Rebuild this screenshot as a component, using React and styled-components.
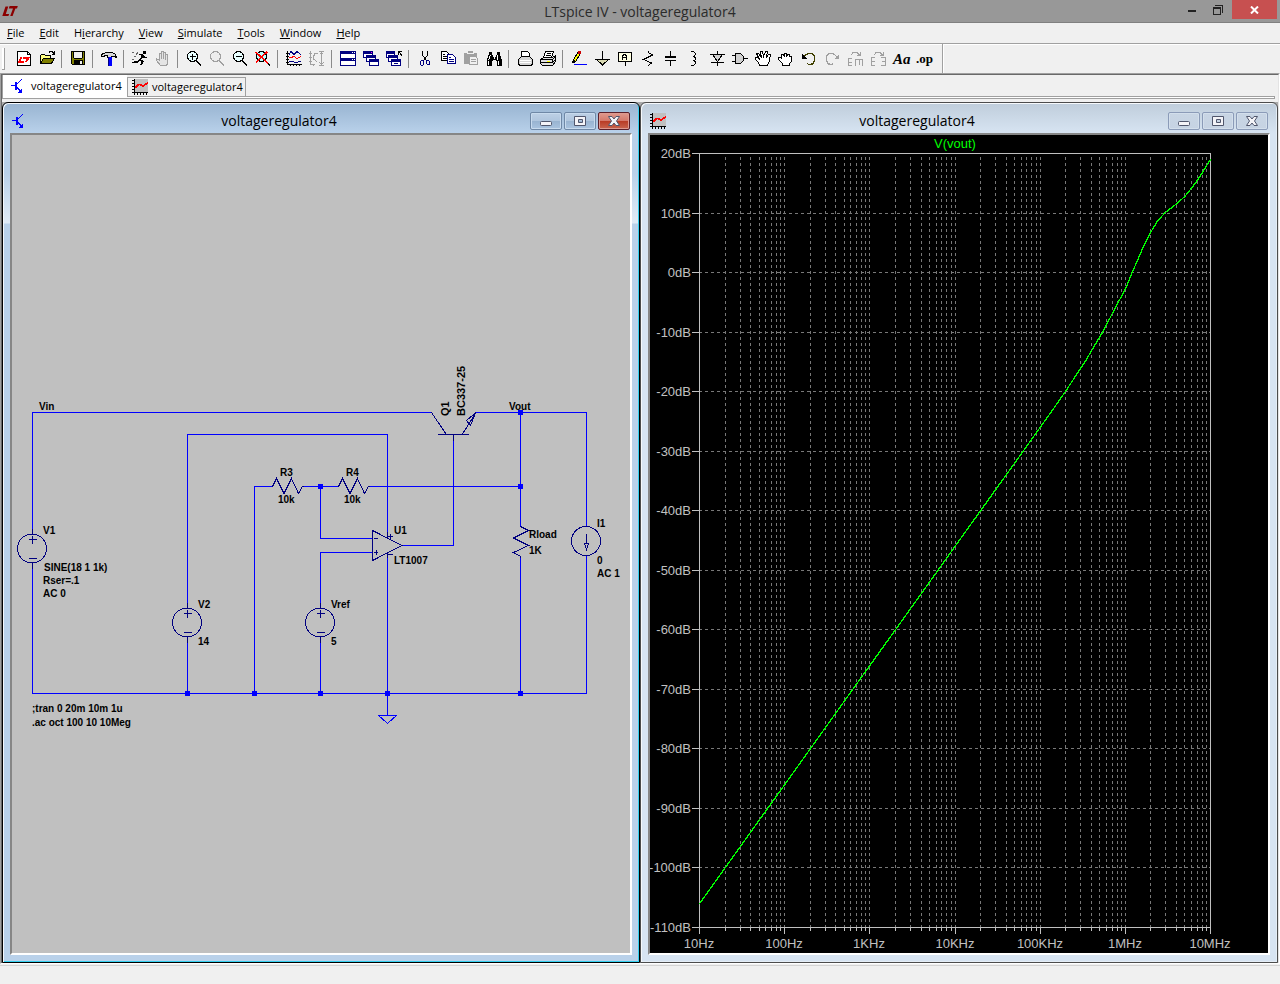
import React, { useLayoutEffect, useRef, useState } from "react";
import styled, { createGlobalStyle, css } from "styled-components";

const GlobalStyle = createGlobalStyle`
  * { box-sizing: border-box; }
  body { margin: 0; background: #f0f0f0; font-family: "Open Sans", "Noto Sans", sans-serif; color: #000; }
  button { font: inherit; color: inherit; border: 0; padding: 0; background: none; }
  svg { display: block; flex: none; }
`;

/* ---------- layout ---------- */

const Page = styled.div`
  display: flex;
  flex-direction: column;
  min-height: 100vh;
`;

const TitleBar = styled.header`
  display: grid;
  grid-template-columns: 1fr auto 1fr;
  height: 23px;
  background: #989898;
  border-bottom: 1px solid #808080;
`;

const Logo = styled.svg`
  margin: 6px 0 0 2px;
`;

const AppTitle = styled.h1`
  margin: 0;
  font-size: 14px;
  line-height: 23px;
  font-weight: 400;
  color: #2b2b2b;
`;

const Controls = styled.div`
  display: flex;
  justify-content: flex-end;
  padding-right: 3px;
`;

const Control = styled.button`
  display: grid;
  place-items: center;
  width: ${(p) => (p.$close ? 45 : 26)}px;
  height: 19px;
  margin-left: ${(p) => (p.$close ? 1 : 0)}px;
  background: ${(p) => (p.$close ? "#c75050" : "transparent")};
`;

const MenuBar = styled.nav`
  display: flex;
  gap: 1px;
  height: 20px;
  background: #f0f0f0;
`;

const MenuButton = styled.button`
  padding: 0 7px;
  font-size: 11px;
  line-height: 20px;
`;

const ToolBar = styled.div`
  display: flex;
  align-items: center;
  height: 30px;
  border-top: 1px solid #a0a0a0;
  box-shadow: inset 0 1px 0 #fff;
  padding-left: 2px;
`;

const Grip = styled.span`
  width: 3px;
  height: 22px;
  margin-right: 8px;
  border: 1px solid #a0a0a0;
  border-width: 0 1px 1px 0;
  background: #fff;
`;

const ToolButton = styled.button`
  width: 23px;
  height: 22px;
  padding: 3px;
`;

const Divider = styled.span`
  width: 1px;
  height: 18px;
  margin: 0 5px 0 2px;
  background: #8a8a8a;
`;

const ToolEnd = styled.span`
  width: 2px;
  align-self: stretch;
  margin-left: 6px;
  border-left: 1px solid #a0a0a0;
  border-right: 1px solid #fff;
`;

const Workspace = styled.main`
  display: flex;
  flex: 1;
  border: 1px solid;
  border-color: #a0a0a0 #fff #fff #a0a0a0;
`;

const WorkspaceInner = styled.div`
  display: flex;
  flex-direction: column;
  flex: 1;
  min-width: 0;
  border: 1px solid;
  border-color: #696969 #e3e3e3 transparent #696969;
  border-bottom: 0;
`;

const Tabs = styled.div`
  display: flex;
  align-items: flex-end;
  height: 21px;
`;

const Tab = styled.button`
  display: flex;
  align-items: center;
  gap: 4px;
  white-space: nowrap;
  font-size: 11px;
  line-height: 18px;
  ${(p) =>
    p.$active
      ? css`
          position: relative;
          height: 22px;
          width: 125px;
          margin-bottom: -1px;
          padding: 0 0 1px 8px;
          background: #fff;
          border-left: 1px solid #a0a0a0;
        `
      : css`
          height: 19px;
          width: 119px;
          padding: 0 0 0 4px;
          background: #f0f0f0;
          border: 1px solid #a0a0a0;
          border-bottom: 0;
        `}
`;

const TabPage = styled.div`
  height: 3px;
  margin: 0 3px 3px 0;
  border: 1px solid #a0a0a0;
  background: #fff;
`;

const Windows = styled.div`
  display: flex;
  flex: 1;
  background: #ababab;
`;

const Win = styled.section`
  display: flex;
  flex-direction: column;
  flex: 1 1 0;
  min-width: 0;
  padding: 0 7px 7px;
  border: 1px solid ${(p) => (p.$active ? "#000" : "#4c4c4c")};
  border-radius: 6px 6px 0 0;
  ${(p) =>
    p.$active
      ? css`
          background: linear-gradient(#98b4d1 0, #b9d1ea 30px, #b9d1ea 70px, #e0ebf6 120px, #b9d1ea 121px);
          box-shadow: inset 1px 1px 0 #f4f8fc, inset -1px -1px 0 #35d0f0;
        `
      : css`
          background: linear-gradient(#bfcddb 0, #d7e4f2 30px);
          box-shadow: inset 1px 1px 0 #f6f9fc, inset -1px -1px 0 #e4edf6;
        `}
`;

const WinHeader = styled.header`
  display: flex;
  align-items: center;
  gap: 2px;
  height: 30px;
  padding: 5px 2px 0 2px;
`;

const WinTitle = styled.h2`
  flex: 1;
  margin: 0;
  text-align: center;
  font-size: 14px;
  line-height: 22px;
  font-weight: 400;
`;

const WinButton = styled.button`
  display: grid;
  place-items: center;
  width: 32px;
  height: 18px;
  border-radius: 2px;
  border: 1px solid ${(p) => (p.$red ? "#5b1f2a" : p.$active ? "#6f88a6" : "#8b9bb8")};
  box-shadow: inset 0 0 0 1px ${(p) => (p.$red ? "#dd9a90" : p.$active ? "#c8dbee" : "#d3dfec")};
  background: ${(p) =>
    p.$red
      ? "linear-gradient(#e09a8e 0, #d4796b 48%, #b83a24 50%, #c9654f 100%)"
      : p.$active
        ? "linear-gradient(#bdd0e5 0, #b0c6de 48%, #98b3d0 50%, #aac4e0 100%)"
        : "linear-gradient(#c8d5e4, #c6d3e3)"};
`;

const Client = styled.div`
  display: grid;
  flex: 1;
  min-height: 0;
  overflow: hidden;
  border: 2px solid;
  border-color: #868686 #fff #fff #868686;
  background: ${(p) => (p.$dark ? "#000" : "#c0c0c0")};
`;

const StatusBar = styled.footer`
  height: 20px;
  margin-top: 1px;
  border-top: 1px solid #d4d4d4;
  background: #f0f0f0;
`;

const SchematicText = styled.text`
  font: bold ${(p) => (p.$part ? 11 : 10)}px "Liberation Sans", sans-serif;
  fill: #000;
`;

const PlotText = styled.text`
  font: 13px "Liberation Sans", sans-serif;
  fill: ${(p) => (p.$trace ? "#00ff00" : "#c0c0c0")};
`;

const GlyphText = styled.text`
  font: italic bold 15px "Liberation Serif", serif;
  fill: #000;
  ${(p) => p.$upright && "font-style: normal; font-size: 13px;"}
`;

/* ---------- icons ---------- */

const K = "#000";
const N = "#000080";
const G = "#a0a0a0";

const L = (d, stroke = K, fill = "none", w = 1) => <path d={d} stroke={stroke} fill={fill} strokeWidth={w} />;
const F = (d, fill = K) => <path d={d} fill={fill} />;

const lens = (c, glass) => (
  <>
    <circle cx="6.5" cy="5.5" r="5" stroke={c} fill={glass} />
    {L("M10 9.5L15 14.5", c, "none", 2)}
  </>
);

const miniWin = (x, y, w, h) => (
  <>
    <rect x={x + 0.5} y={y + 0.5} width={w - 1} height={h - 1} stroke={N} fill="#fff" />
    <rect x={x} y={y} width={w} height="3" fill={N} />
  </>
);

const openHand = (c, fill) =>
  L("M4.5 14.5L3.5 11.5L0.5 8.5V6.5H2.5L4.5 8.5L1.5 2.5L3.5 2.5L6.5 6.5L5.5 0.5H7.5L8.5 5.5L10.5 0.5H12.5L11.5 6.5L13.5 3.5H15.5L14.5 9.5L12.5 14.5Z", c, fill);

const glyphs = {
  newFile: <>{L("M1.5 0.5H11.5L14.5 3.5V14.5H1.5Z", K, "#fff")}{L("M11.5 0.5V3.5H14.5")}{L("M5.5 6L3.5 10.5H7.5M7 6.5H12.5L10 11", "#f00", "none", 2)}</>,
  open: <>{L("M1.5 12.5V4.5L2.5 3.5H5.5L6.5 4.5H11.5V7.5", K, "#ffff80")}{L("M1.5 12.5L4.5 7.5H15.5L12.5 12.5Z", K, "#808000")}{L("M9.5 2.5L11 0.5H13L15.5 3M15.5 0V3.5H12.5")}</>,
  save: <>{L("M1.5 0.5H14.5V13.5H2.5L1.5 12.5Z", K, "#808000")}{F("M4 1H12V7H4Z", "#f0f0f0")}{F("M4 9H13V14H4Z")}{F("M10 10H12V13H10Z", "#f0f0f0")}{L("M3.5 1V6.5L4.5 7.5H11.5L12.5 6.5V1")}</>,
  hammer: <>{L("M0.5 5.5V3.5L2.5 2.5L5.5 1.5H11.5L14.5 3.5L15.5 6.5L13.5 5.5H10.5V6.5H6.5V4.5H4.5L2.5 5.5Z", K, "#d8d8d8")}{F("M7 6H11V15H7Z", "#00f")}{F("M7 6H8V15H7Z", N)}</>,
  run: <>{F("M11 0H14V3H11Z")}{L("M6.5 3.5L8.500 3.500L11 4.500L8 9L11 10.500L8.500 14.500M8 8.500L5 11L0 11.500M11 4.500L12.500 6.500L15 6.500", K, "none", 1.6)}{L("M0 1.5H2M4 3.5L6 1.5M2 5.5H4M0 8.5H2", "#666")}</>,
  stop: L("M5.5 14.5L1.5 9.5L1.5 7.5L4.5 9.5V2.5H6.5V7.5V0.5H8.5V7.5V1.5H10.5V8.5V3.5H12.5V12.5L11.5 14.5Z", G, "#e4e4e4"),
  zoomIn: <>{lens(K, "#e8ffff")}{L("M6.5 2.5V8.5M3.5 5.5H9.5")}</>,
  pan: lens(G, "#ededed"),
  zoomOut: <>{lens(K, "#e8ffff")}{L("M3.5 5.5H9.5")}</>,
  zoomFit: <>{lens(K, "#b8ffff")}{L("M0.5 1L13 12M12.5 0.5L1 11.5", "#f00", "none", 1.6)}</>,
  plot: <>{L("M1.5 0V13.5H16M0 2.5H3M0 5.5H3M0 8.5H3M0 11.5H3M4.5 13V15M7.5 13V15M10.5 13V15M13.5 13V15")}{L("M3 3.5L5 0.5L8 3.500L11 0.500L15 3.500", N)}{L("M3 6.5H5L8 5.500L11 7.500L15 5.500", "#f00")}{L("M3 10.5H7L9 11.5L15 10.5", N)}</>,
  axes: <>{L("M1.5 0V13.5H6M0 2.5H3M0 6.5H3M0 10.5H3M4.5 13V15M12.5 1V14M10 0.5H15M10 14.5H15M10.5 3.5L12.5 1.500L14.500 3.500M10.500 11.500L12.500 13.500L14.500 11.500", G)}{L("M9 2.5L6 2.5L4.5 5.5L5 8.5L8 10.5", G)}</>,
  tile: <>{miniWin(0, 0, 16, 8)}{miniWin(0, 7, 16, 8)}{F("M12 1H13V2H12ZM14 1H15V2H14ZM12 8H13V9H12ZM14 8H15V9H14Z", "#fff")}</>,
  cascade: <>{miniWin(0, 0, 10, 7)}{miniWin(3, 4, 10, 7)}{miniWin(6, 8, 10, 7)}{F("M8 1H9V2H8Z", "#f0f")}</>,
  closeAll: <>{miniWin(0, 0, 9, 7)}{miniWin(2, 4, 10, 7)}{miniWin(5, 8, 10, 7)}{L("M12.5 4V0.5H16M12.5 0.5L16 4.5")}{L("M8 12.5H12", N)}</>,
  cut: <>{L("M5.5 0V4L9.5 9.5M10.5 0V4L6.5 9.5")}{L("M4.5 9.5H6.5V13.5L5.5 14.5H4.5L3.5 13.5V10.5ZM9.5 9.5H11.5L12.5 10.5V13.5H10.5L9.5 12.5Z", N)}</>,
  copy: <>{L("M1.5 0.5H6.5L9.5 3.5V9.5H1.5Z", K, "#fff")}{L("M3 3.5H5M3 5.5H8M3 7.5H8")}{L("M7.5 3.5H12.500L15.500 6.500V12.500H7.500Z", N, "#fff")}{L("M9 6.5H11M9 8.5H14M9 10.5H14", N)}</>,
  paste: <>{F("M1 2H5V0H10V2H14V13H1Z", G)}{L("M4 2.5H11", "#f0f0f0")}{L("M6.5 5.5H12.5L14.5 7.5V13.5H6.5Z", G, "#f0f0f0")}{L("M8 8.5H13M8 10.5H13", G)}</>,
  find: <>{F("M3 1H6V3L7 5V6H10V5L11 3V1H14V3L16 9V15H11V10H10V9H7V10H6V15H1V9L3 3Z")}{L("M4.5 4L2.5 9M11.5 4V9M2.5 10V14M12.5 10V14", "#fff")}{F("M8 6H9V8H8Z", "#f0f0f0")}</>,
  print: <>{L("M4.5 5.5V0.5H10.5L12.5 2.5V5.5", K, "#fff")}{L("M1.5 8.5L4.5 5.5H12.5L15.5 8.5V13.5H14.5V14.5H2.5V13.5H1.5Z", K, "#d4d4d4")}{L("M3 9.5H14M3 11.5H14", "#fff")}</>,
  printer: <>{L("M3.5 6.5L5.5 0.5H13.5L11.5 6.5", K, "#fff")}{L("M7 2.5H11M6 4.5H11")}{L("M0.5 8.5L3.5 6.5H12.5L15.5 4.5V10.5L12.5 14.5H2.5L0.5 12.5Z", K, "#e0e0e0")}{L("M0.5 8.5H12.5L15.5 5.5M0.5 11.5H12.5V8.5M12.5 11.5L15 9")}{F("M7 10H10V11H7Z", "#ff0")}</>,
  pencil: <>{L("M7.5 0.5L9.5 2.5L4.5 10.5L2.500 11.500V8.500Z", K, "#ff0")}{F("M7 0H10V3H7Z", "#c00")}{F("M2 9H4V12H1V11Z")}{L("M3 13.5H16", "#00f")}</>,
  ground: <>{L("M8.5 0V8")}{L("M2.5 8.5H14.5L8.5 14Z", K, "#d8d8b0")}{L("M1 8.5H16")}</>,
  label: <>{L("M1.5 1.5H14.5V10.5H1.5Z", K, "#ffffe0")}{L("M8 11V15M5.5 9V5.5L6.5 3.5H8.5L9.5 5.5V9M6 6.5H9", K)}</>,
  resistor: L("M8.5 0V1.5L12.5 4L3.5 8.5L11.5 12L8.5 14.5V15", K),
  capacitor: <>{L("M7.5 0V6M7.5 9V15")}{F("M2 5H13V7H2ZM2 9H13V10H2Z")}</>,
  inductor: L("M4.5 0.5H7.5L9.5 2.5V3.5L7.5 5.5H6.5H8.5L9.5 7.5V8.5L8.5 9.5H6.5H8.5L9.5 11.5V12.5L7.5 14.5H4.5"),
  diode: <>{L("M8.5 0V3M8.5 10V15M1 3.5H16M2 11.5H15")}{L("M3.5 3.5H13.5L8.5 10.5Z", K, "#d0d0d0")}</>,
  gate: <>{L("M0 4.5H4M0 10.5H4M12 7.5H16")}{L("M3.5 2.5H8.5L11.5 5.5V9.5L8.5 12.5H3.5Z", K, "#d0d0d0")}</>,
  move: openHand(K, "#fff"),
  drag: L("M4.500 14.500V12.500L0.500 8.500V6.500H2.500L3.500 7.500V3.500H5.500L6.500 5.500V2.500H8.500V5.500L9.500 3.500H11.500V5.500H13.500V10.500L11.500 12.500V14.500Z", K, "#fff"),
  undo: <>{L("M2.5 6L6 3L8.5 2.5H11L13.500 5.500V10L11.500 13L8 13.500L6 12.500", "#404000", "none", 1.3)}{F("M1 3L1 8H6Z")}</>,
  redo: <>{L("M13 6L10 3L7.500 2.500H5L2.500 5.500V10L4.500 13L8 13.500L9.500 12.500", G, "none", 1.3)}{F("M15 3V8H10Z", G)}</>,
  rotate: L("M5 7.5H1.5V14.5H5M1.5 11.5H5M8.5 15V8.5H15.5V15M12 8.5V14M3.5 4.5L6 1.5H10L13 4.5M13.5 1V4.5H10", G),
  mirror: L("M5 6.5H1.5V14.5H5M1.5 10.5H5M11 6.5H15.5V14.5H11M15.5 10.5H12M3.5 4.5L6 1.5H10L13 4.5M13.5 1V4.5H10", G),
  text: <GlyphText x="0" y="13">Aa</GlyphText>,
  op: <GlyphText $upright x="0" y="12">.op</GlyphText>,
  transistor: <>{F("M4 4H6V12H4ZM0 7H4V8H0Z", "#00f")}{L("M6 6L10.500 1.500M6 9.500L10 13.500", "#00f")}{F("M11 15V11L9 12L7 15Z", "#00f")}</>,
  wave: <>{F("M2 0H16V13H2Z", "#c0c0c0")}{L("M2.5 0V16M0 1.5H2M0 4.5H2M0 7.5H2M0 10.5H2M0 13.5H16M5.5 14V16M8.5 14V16M11.5 14V16M14.5 14V16")}{L("M3 9L6.5 5.5H8.5L11 7.5L16 3.5", "#f00", "none", 1.6)}</>,
};

const Icon = ({ name }) => (
  <svg width="16" height="16" viewBox="0 0 16 16" fill="none" shapeRendering="crispEdges" overflow="visible" aria-hidden="true">
    {glyphs[name]}
  </svg>
);

const toolGroups = [
  [["newFile", "New schematic"], ["open", "Open"]],
  [["save", "Save"]],
  [["hammer", "Control panel"]],
  [["run", "Run"], ["stop", "Halt"]],
  [["zoomIn", "Zoom in"], ["pan", "Pan"], ["zoomOut", "Zoom out"], ["zoomFit", "Zoom full extents"]],
  [["plot", "Autorange"], ["axes", "Pick visible traces"]],
  [["tile", "Tile windows"], ["cascade", "Cascade windows"], ["closeAll", "Close all windows"]],
  [["cut", "Cut"], ["copy", "Copy"], ["paste", "Paste"], ["find", "Find"]],
  [["print", "Print setup"], ["printer", "Print"]],
  [
    ["pencil", "Wire"], ["ground", "Ground"], ["label", "Label net"], ["resistor", "Resistor"],
    ["capacitor", "Capacitor"], ["inductor", "Inductor"], ["diode", "Diode"], ["gate", "Component"],
    ["move", "Move"], ["drag", "Drag"], ["undo", "Undo"], ["redo", "Redo"],
    ["rotate", "Rotate"], ["mirror", "Mirror"], ["text", "Text"], ["op", "SPICE directive"],
  ],
];

/* [text before mnemonic, mnemonic, rest] */
const menus = [
  ["", "F", "ile"], ["", "E", "dit"], ["H", "i", "erarchy"], ["", "V", "iew"],
  ["", "S", "imulate"], ["", "T", "ools"], ["", "W", "indow"], ["", "H", "elp"],
];

/* ---------- schematic ---------- */

const Source = ({ x, y }) => (
  <g stroke={N} fill="none">
    <circle cx={x - 0.5} cy={y} r="14.5" />
    <path d={`M${x} ${y - 20}v6M${x} ${y + 14}v6M${x - 4} ${y - 9}h8M${x} ${y - 13}v8M${x - 4} ${y + 10}h8`} />
  </g>
);

const Resistor = ({ x, y, vertical }) => (
  <path
    d="M-16 0H-15L-11 -8L-3.5 7L4 -8L11 7L15 0H16"
    transform={`translate(${x} ${y})${vertical ? " rotate(90)" : ""}`}
    stroke={N}
    fill="none"
  />
);

const nodes = [[187, 693], [254, 693], [320, 693], [387, 693], [520, 693], [320, 486], [520, 486], [520, 412]];

const labels = [
  [39, 410, "Vin"], [509, 410, "Vout"], [43, 534, "V1"], [44, 571, "SINE(18 1 1k)"], [43, 584, "Rser=.1"],
  [43, 597, "AC 0"], [198, 608, "V2"], [198, 645, "14"], [280, 476, "R3"], [278, 503, "10k"], [346, 476, "R4"],
  [344, 503, "10k"], [394, 534, "U1"], [394, 564, "LT1007"], [331, 608, "Vref"], [331, 645, "5"],
  [529, 538, "Rload"], [529, 554, "1K"], [597, 527, "I1"], [597, 564, "0"], [597, 577, "AC 1"],
  [32, 712, ";tran 0 20m 10m 1u"], [32, 726, ".ac oct 100 10 10Meg"],
];

const Schematic = () => (
  <svg width="618" height="610" viewBox="12 135 618 610" role="img" aria-label="Voltage regulator schematic">
    <g shapeRendering="crispEdges">
      <path
        stroke="#0000ff"
        fill="none"
        d="M32.5 534V412.5H431.5M32.5 563V693.5H586.5V556M187.5 608V434.5H387.5V534M187.5 637V693
           M272 486.5H254.5V693M303 486.5H338M369 486.5H520.5M320.5 486V538.5H372M372 552.5H320.5V608
           M320.5 637V693M387.5 556V715.5M402 545.5H453.5V440M476 412.5H586.5V526M520.5 412V526M520.5 557V693
           M378.5 715.5H396.5L387.5 723.5Z"
      />
      <Source x={32.5} y={548.5} />
      <Source x={187.5} y={622.5} />
      <Source x={320.5} y={622.5} />
      <Resistor x={287.5} y={486.5} />
      <Resistor x={353.5} y={486.5} />
      <Resistor x={520.5} y={541.5} vertical />
      <g stroke={N} fill="none">
        <path d="M372.5 530.5V560.5L402 545.5ZM374 538.5H378M374 552.5H378M376.5 550V555M388 536.5H393M390.5 534V539M388 554.5H393M387.5 532V538M387.5 553V558" />
        <path d="M431.5 412.5L446 434M438 434.5H469M453.5 434V441M476 412.5L462.5 434M475.5 413L466.5 420.5L470.5 425.5Z" />
        <circle cx="586" cy="541" r="14.5" />
        <path d="M586.5 534V543M584.5 543.5H588.5L586.5 549.5Z" />
      </g>
      {nodes.map(([x, y]) => (
        <rect key={`${x}-${y}`} x={x - 2} y={y - 2} width="5" height="5" fill="#0000ff" />
      ))}
    </g>
    {labels.map(([x, y, t]) => (
      <SchematicText key={`${x}-${y}`} x={x} y={y}>{t}</SchematicText>
    ))}
    <SchematicText $part transform="translate(449 416) rotate(-90)">Q1</SchematicText>
    <SchematicText $part transform="translate(465 416) rotate(-90)">BC337-25</SchematicText>
  </svg>
);

/* ---------- plot ---------- */

/* [decades above 10 Hz, gain in dB] */
const trace = [
  [0, -106], [4.15, -23], [4.3, -19.9], [4.53, -14.9], [4.75, -9.6], [4.86, -6.5], [5, -2.8], [5.08, 0], [5.22, 4.6],
  [5.29, 6.6], [5.38, 8.7], [5.47, 10.1], [5.58, 11.3], [5.7, 12.8], [5.79, 14.4], [5.87, 16], [5.93, 17.4], [6, 19],
];
const freqs = ["10Hz", "100Hz", "1KHz", "10KHz", "100KHz", "1MHz", "10MHz"];

const useSize = (initial) => {
  const ref = useRef(null);
  const [size, setSize] = useState(initial);
  useLayoutEffect(() => {
    const el = ref.current;
    const read = () => setSize([el.clientWidth, el.clientHeight]);
    read();
    const ro = new ResizeObserver(read);
    ro.observe(el);
    return () => ro.disconnect();
  }, []);
  return [ref, size];
};

const PlotArea = styled.div`
  min-width: 0;
  min-height: 0;
  overflow: hidden;
`;

const Plot = () => {
  const [ref, [w, h]] = useSize([618, 818]);
  const left = 49;
  const right = Math.max(w - 58, left + 100);
  const top = 18;
  const bottom = Math.max(h - 26, top + 100);
  const px = (d) => left + (d / 6) * (right - left) + 0.5;
  const py = (db) => top + ((20 - db) / 130) * (bottom - top) + 0.5;
  const snap = (v) => Math.floor(v) + 0.5;
  const dbs = Array.from({ length: 14 }, (_, i) => 20 - i * 10);
  const cols = [];
  for (let d = 0; d < 6; d++) for (let m = 2; m <= 10; m++) cols.push(d + Math.log10(m));
  return (
    <PlotArea ref={ref}>
      <svg width={w} height={h} role="img" aria-label="V(vout) frequency response">
        <g shapeRendering="crispEdges" fill="none" stroke="#c0c0c0">
          <g stroke="#787878" strokeDasharray="3 3">
            {cols.slice(0, -1).map((d) => <path key={d} d={`M${snap(px(d))} ${top + 4}V${bottom}`} />)}
            {dbs.slice(1, -1).map((v) => <path key={v} d={`M${left} ${snap(py(v))}H${right}`} />)}
          </g>
          <rect x={left + 0.5} y={top + 0.5} width={right - left} height={bottom - top} />
          {dbs.map((v) => <path key={v} d={`M${left - 7} ${snap(py(v))}H${left}`} />)}
          {cols.map((d) => <path key={d} d={`M${snap(px(d))} ${bottom}v${Number.isInteger(d) ? 7 : 4}`} />)}
          <path d={`M${left + 0.5} ${bottom}v7`} />
          <polyline points={trace.map(([d, v]) => `${px(d)},${py(v)}`).join(" ")} stroke="#00ff00" strokeWidth="1.3" />
        </g>
        {dbs.map((v) => <PlotText key={v} x={left - 8} y={Math.floor(py(v)) + 5} textAnchor="end">{v}dB</PlotText>)}
        {freqs.map((f, i) => <PlotText key={f} x={Math.floor(px(i))} y={bottom + 21} textAnchor="middle">{f}</PlotText>)}
        <PlotText $trace x={Math.round((left + right) / 2)} y="13" textAnchor="middle">V(vout)</PlotText>
      </svg>
    </PlotArea>
  );
};

/* ---------- windows ---------- */

const WindowGlyph = ({ kind }) => (
  <svg width="14" height="12" viewBox="0 0 14 12" fill="#f4f4f8" stroke="#50566c" strokeWidth="1" aria-hidden="true">
    {kind === "min" && <rect x="1.5" y="6.5" width="11" height="4" rx="1" />}
    {kind === "max" && <path fillRule="evenodd" d="M1.5 1.5H12.5V10.5H1.5ZM5.5 4.5H9.5V7.5H5.5Z" />}
    {kind === "close" && <path d="M1.5 1.5H5L7 4L9 1.5H12.5L9.5 6L12.5 10.5H9L7 8L5 10.5H1.5L4.5 6Z" />}
  </svg>
);

const DocWindow = ({ icon, title, active, dark, children }) => (
  <Win $active={active}>
    <WinHeader>
      <Icon name={icon} />
      <WinTitle>{title}</WinTitle>
      <WinButton $active={active} aria-label="Minimize"><WindowGlyph kind="min" /></WinButton>
      <WinButton $active={active} aria-label="Maximize"><WindowGlyph kind="max" /></WinButton>
      <WinButton $active={active} $red={active} aria-label="Close"><WindowGlyph kind="close" /></WinButton>
    </WinHeader>
    <Client $dark={dark}>{children}</Client>
  </Win>
);

export default function App() {
  return (
    <Page>
      <GlobalStyle />
      <TitleBar>
        <Logo width="16" height="11" viewBox="0 0 16 11" fill="#8b0000" aria-hidden="true">
          <path d="M3.5 0.5H6.3L3.8 8H7.2L6.4 10H0.3ZM7.6 0H15.8L15 2.4H13.4L10.6 10H8.2L11 2.4H6.8Z" />
        </Logo>
        <AppTitle>LTspice IV - voltageregulator4</AppTitle>
        <Controls>
          <Control aria-label="Minimize"><svg width="8" height="7"><path d="M0 4H8V6H0Z" fill="#222" /></svg></Control>
          <Control aria-label="Restore">
            <svg width="11" height="10" fill="none" stroke="#222" shapeRendering="crispEdges"><path d="M0.5 2.5H7.5V9.5H0.5ZM0 3.5H8M2 0.5H9.5V8" /></svg>
          </Control>
          <Control $close aria-label="Close"><svg width="9" height="8"><path d="M1 0.5L8 7.5M8 0.5L1 7.5" stroke="#fff" strokeWidth="2" /></svg></Control>
        </Controls>
      </TitleBar>
      <MenuBar>
        {menus.map(([pre, key, rest]) => (
          <MenuButton key={pre + key + rest}>{pre}<u>{key}</u>{rest}</MenuButton>
        ))}
      </MenuBar>
      <ToolBar role="toolbar" aria-label="Tools">
        <Grip />
        {toolGroups.map((group, i) => (
          <React.Fragment key={i}>
            {i > 0 && <Divider />}
            {group.map(([name, label]) => (
              <ToolButton key={name} aria-label={label}><Icon name={name} /></ToolButton>
            ))}
          </React.Fragment>
        ))}
        <ToolEnd />
      </ToolBar>
      <Workspace>
        <WorkspaceInner>
          <Tabs role="tablist">
            <Tab $active role="tab" aria-selected="true"><Icon name="transistor" />voltageregulator4</Tab>
            <Tab role="tab" aria-selected="false"><Icon name="wave" />voltageregulator4</Tab>
          </Tabs>
          <TabPage />
          <Windows>
            <DocWindow icon="transistor" title="voltageregulator4" active><Schematic /></DocWindow>
            <DocWindow icon="wave" title="voltageregulator4" dark><Plot /></DocWindow>
          </Windows>
        </WorkspaceInner>
      </Workspace>
      <StatusBar />
    </Page>
  );
}
